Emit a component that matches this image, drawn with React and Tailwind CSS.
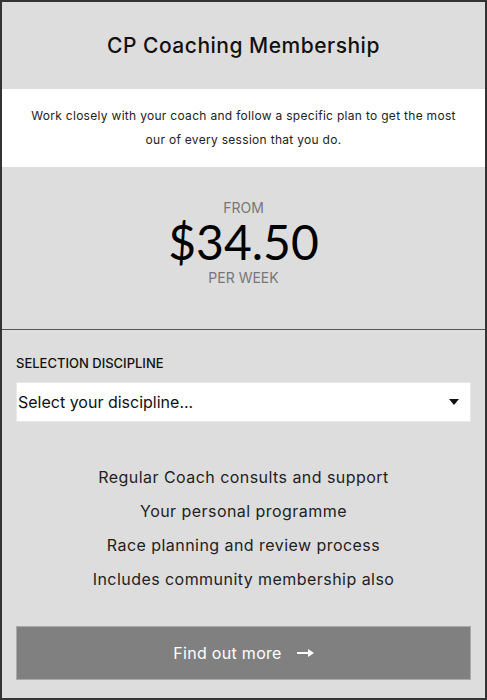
const features = [
  "Regular Coach consults and support",
  "Your personal programme",
  "Race planning and review process",
  "Includes community membership also",
];

export default function App() {
  return (
    <div
      className="w-[487px] h-[700px] bg-[#dddddd] border-2 border-[#333333] flex flex-col text-[#111111]"
      style={{ fontFamily: "Inter, 'Noto Sans', sans-serif" }}
    >
      <div className="h-[87px] flex items-center justify-center">
        <h1 className="text-[21px] font-medium tracking-[0.5px]">CP Coaching Membership</h1>
      </div>

      <div className="h-[78px] bg-white flex flex-col items-center justify-center text-[12px] leading-[24px] tracking-[0.3px] text-[#222]">
        <p>Work closely with your coach and follow a specific plan to get the most</p>
        <p>our of every session that you do.</p>
      </div>

      <div className="h-[163px] pb-[10px] flex flex-col items-center justify-center border-b border-[#555]">
        <span className="text-[14px] text-[#777] leading-[16px]">FROM</span>
        <span className="text-[48px] leading-[52px] text-black" style={{ fontFamily: "Lato, sans-serif" }}>
          $34.50
        </span>
        <span className="mt-[2px] text-[14px] text-[#777] leading-[16px]">PER WEEK</span>
      </div>

      <div className="px-[14px] pt-[25px]">
        <div className="text-[13px] font-medium leading-[16px]">SELECTION DISCIPLINE</div>
        <div className="mt-[11px] h-[40px] bg-white border border-[#e8e8e8] flex items-center justify-between pl-[1px] pr-[10px]">
          <span className="text-[16px]">Select your discipline...</span>
          <svg width="12" height="8" viewBox="0 0 12 8">
            <path d="M1 1h10L6 7z" fill="#111" />
          </svg>
        </div>
      </div>

      <div className="mt-[45px] flex flex-col items-center gap-[13px] text-[16px] leading-[21px] tracking-[0.45px] text-[#222]">
        {features.map((f) => (
          <p key={f}>{f}</p>
        ))}
      </div>

      <div className="px-[14px] mt-[36px]">
        <button className="w-full h-[54px] bg-[#808080] border border-[#aaa] text-white text-[16px] tracking-[0.3px] flex items-center justify-center gap-[15px]">
          <span>Find out more</span>
          <svg width="17" height="10" viewBox="0 0 17 10">
            <path d="M0 5h12" stroke="#fff" strokeWidth="2" />
            <path d="M11 1l6 4-6 4z" fill="#fff" />
          </svg>
        </button>
      </div>
    </div>
  );
}
